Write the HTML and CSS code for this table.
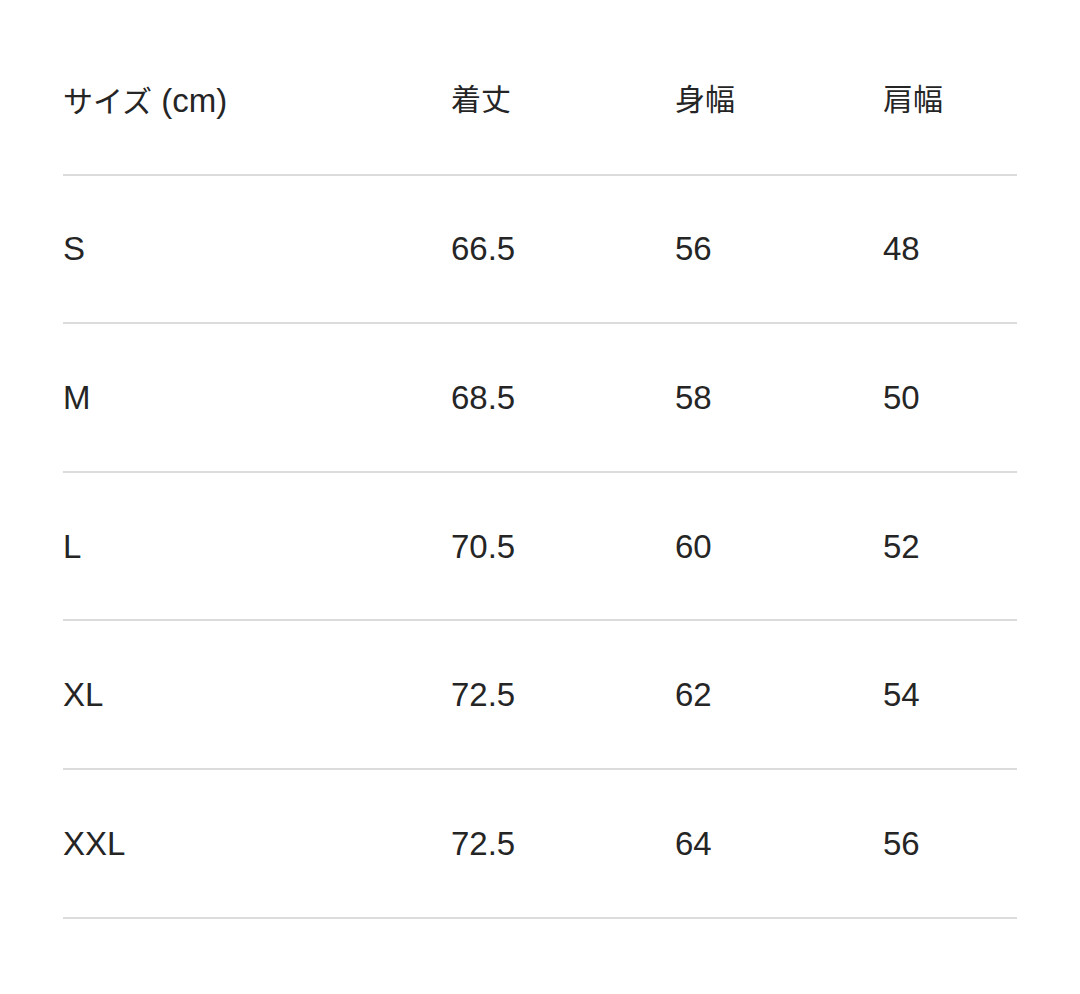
FILE: index.html
```html
<!DOCTYPE html>
<html lang="ja">
<head>
<meta charset="utf-8">
<link rel="stylesheet" href="styles.css">
</head>
<body>
<div class="table">
  <div class="row head"><div><span class="ja">サイズ</span> (cm)</div><div class="ja">着丈</div><div class="ja">身幅</div><div class="ja">肩幅</div></div>
  <div class="row"><div>S</div><div>66.5</div><div>56</div><div>48</div></div>
  <div class="row"><div>M</div><div>68.5</div><div>58</div><div>50</div></div>
  <div class="row"><div>L</div><div>70.5</div><div>60</div><div>52</div></div>
  <div class="row"><div>XL</div><div>72.5</div><div>62</div><div>54</div></div>
  <div class="row"><div>XXL</div><div>72.5</div><div>64</div><div>56</div></div>
</div>
</body>
</html>
```

FILE: styles.css
```css
html, body {
  margin: 0;
  background: #ffffff;
}
body {
  font-family: "Liberation Sans", "Noto Sans CJK JP", sans-serif;
  color: #252525;
  font-size: 33px;
}
.table {
  margin-left: 63px;
  width: 954px;
  padding-top: 27px;
}
.row {
  display: grid;
  grid-template-columns: 388px 224px 208px 1fr;
  align-items: center;
  height: 146.6px;
  border-bottom: 2px solid #dcdcdc;
}
.row > div {
  line-height: 1;
}
.ja {
  font-size: 30px;
}
```
